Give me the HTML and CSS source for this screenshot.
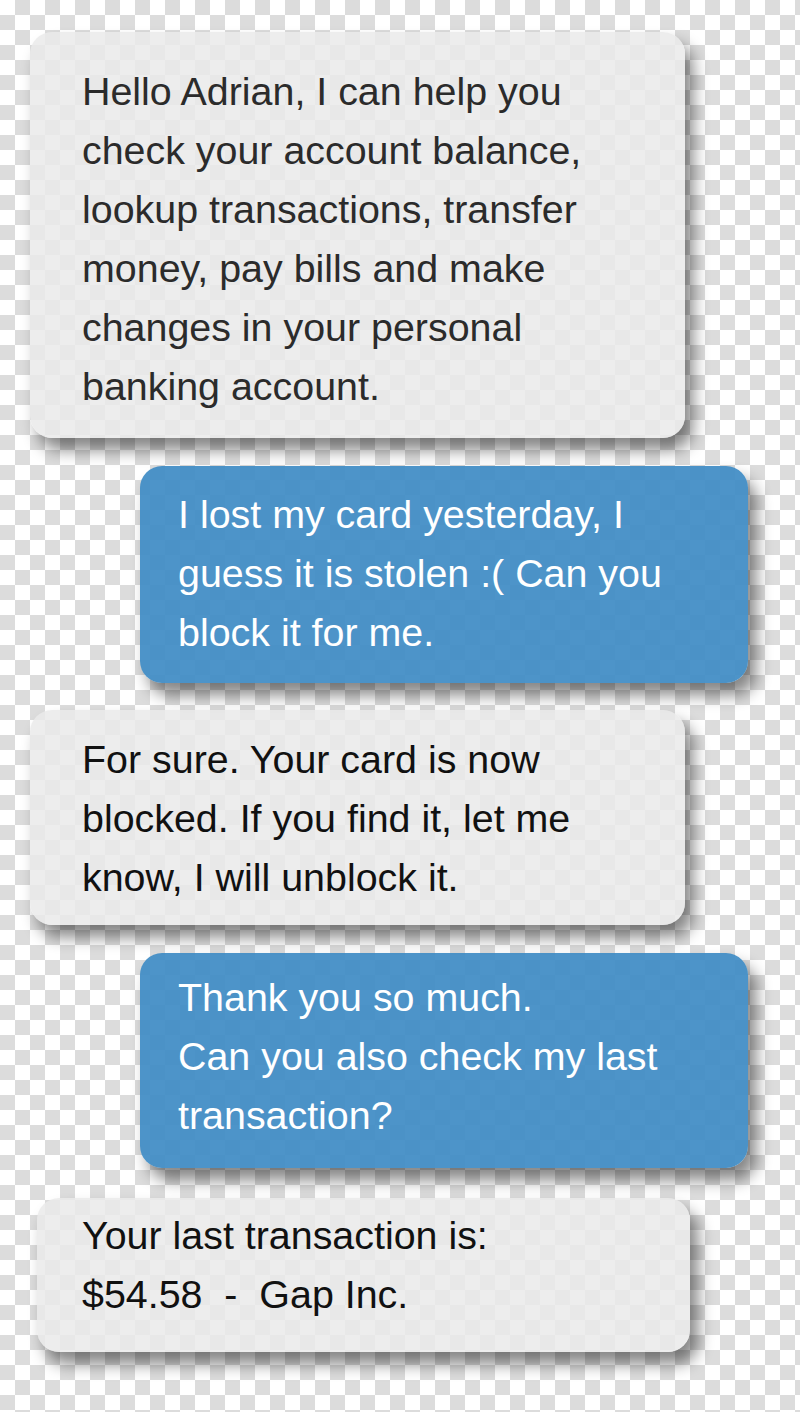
FILE: index.html
```html
<!DOCTYPE html>
<html lang="en">
<head>
<meta charset="utf-8">
<title>Chat</title>
<link rel="stylesheet" href="styles.css">
</head>
<body>
<main class="chat">
  <div class="bubble bot b1">
    <p>Hello Adrian, I can help you<br>check your account balance,<br>lookup transactions, transfer<br>money, pay bills and make<br>changes in your personal<br>banking account.</p>
  </div>
  <div class="bubble user b2">
    <p>I lost my card yesterday, I<br>guess it is stolen :( Can you<br>block it for me.</p>
  </div>
  <div class="bubble bot b3">
    <p>For sure. Your card is now<br>blocked. If you find it, let me<br>know, I will unblock it.</p>
  </div>
  <div class="bubble user b4">
    <p>Thank you so much.<br>Can you also check my last<br>transaction?</p>
  </div>
  <div class="bubble bot b5">
    <p>Your last transaction is:<br>$54.58 &nbsp;- &nbsp;Gap Inc.</p>
  </div>
</main>
</body>
</html>
```
FILE: styles.css
```css
html, body {
  margin: 0;
  padding: 0;
}
body {
  width: 800px;
  height: 1412px;
  overflow: hidden;
  background: repeating-conic-gradient(#dcdcdc 0 25%, #ffffff 0 50%) 0 0 / 30px 30px;
  font-family: "Liberation Sans", Arial, sans-serif;
}
.chat {
  display: flex;
  flex-direction: column;
  padding-top: 32px;
}
.bubble {
  box-sizing: border-box;
  border-radius: 22px;
  box-shadow: 8px 12px 16px rgba(0, 0, 0, 0.48);
}
.bubble p {
  margin: 0;
  font-size: 39.4px;
  line-height: 59px;
  white-space: nowrap;
}
.bot {
  background: rgba(234, 234, 234, 0.84);
  margin-left: 30px;
  width: 655px;
  padding-left: 52px;
}
.bot p {
  color: #111;
}
.user {
  background: rgba(62, 139, 196, 0.92);
  margin-left: 140px;
  width: 608px;
  padding-left: 38px;
}
.user p {
  color: #fff;
}
.b1 {
  height: 406px;
  padding-top: 30px;
}
.b1 p {
  color: #2b2b2b;
}
.b2 {
  margin-top: 28px;
  height: 217px;
  padding-top: 19px;
}
.b3 {
  margin-top: 27px;
  height: 215px;
  padding-top: 20px;
}
.b4 {
  margin-top: 28px;
  height: 215px;
  padding-top: 15px;
}
.b5 {
  margin-top: 30px;
  margin-left: 37px;
  width: 653px;
  padding-left: 45px;
  height: 154px;
  padding-top: 8px;
}
```
